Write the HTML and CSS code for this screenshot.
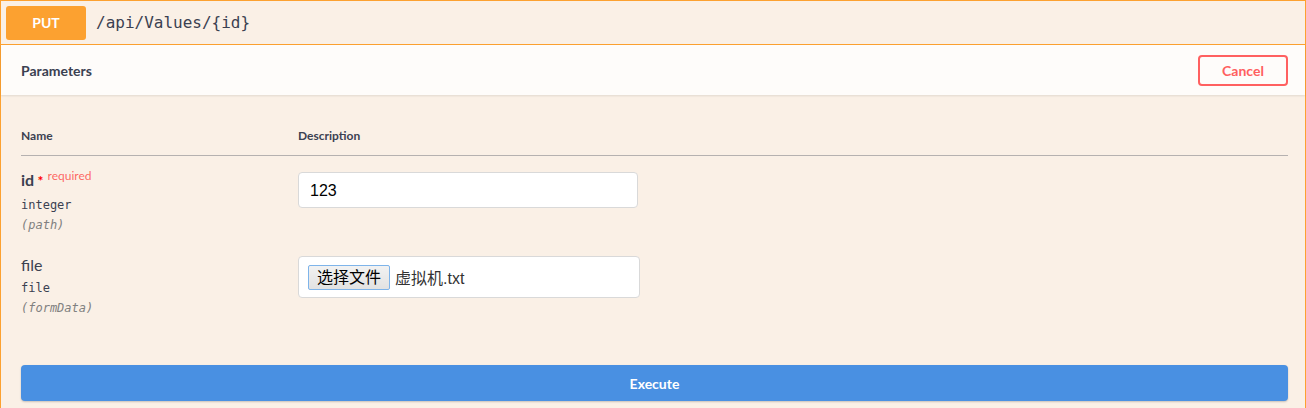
FILE: index.html
```html
<!DOCTYPE html>
<html>
<head>
	<meta charset="utf-8">
	<meta name="viewport" content="width=device-width, initial-scale=1.0">
	<link rel="stylesheet" href="styles.css">
</head>
<body>
	<div class="opblock">
		<!-- operation summary -->
		<div class="summary">
			<span class="method">PUT</span>
			<span class="path">/api/Values/{id}</span>
		</div>

		<!-- parameters header -->
		<div class="section-header">
			<h4>Parameters</h4>
			<button class="btn-cancel">Cancel</button>
		</div>

		<div class="params">
			<table>
				<thead>
					<tr>
						<th class="col-name">Name</th>
						<th>Description</th>
					</tr>
				</thead>
				<tbody>
					<tr>
						<td class="col-name">
							<div class="param-name required">id<span class="star">&nbsp;*</span><span class="req">required</span></div>
							<div class="param-type">integer</div>
							<div class="param-in">(path)</div>
						</td>
						<td>
							<div class="text-input">123</div>
						</td>
					</tr>
					<tr>
						<td class="col-name">
							<div class="param-name">file</div>
							<div class="param-type">file</div>
							<div class="param-in">(formData)</div>
						</td>
						<td>
							<div class="file-input">
								<span class="file-btn">选择文件</span>
								<span class="file-name">虚拟机.txt</span>
							</div>
						</td>
					</tr>
				</tbody>
			</table>
		</div>

		<!-- execute -->
		<div class="execute-wrapper">
			<button class="btn-execute">Execute</button>
		</div>
	</div>
</body>
</html>
```

FILE: styles.css
```css
body {
	margin: 0;
	background: #fff;
	font-family: Lato, sans-serif;
	color: #3b4151;
}

/* operation block */
.opblock {
	border: 1px solid #fca130;
	background: #faf0e6;
}

.summary {
	display: flex;
	align-items: center;
	height: 43px;
	padding: 0 5px;
	border-bottom: 1px solid #fca130;
}

.method {
	width: 80px;
	height: 34px;
	line-height: 34px;
	border-radius: 3px;
	background: #fca130;
	color: #fff;
	font-size: 14px;
	font-weight: 700;
	text-align: center;
}

.path {
	padding: 0 10px;
	font-family: "DejaVu Sans Mono", monospace;
	font-size: 16px;
	color: #3b4151;
}

/* parameters header */
.section-header {
	display: flex;
	align-items: center;
	justify-content: space-between;
	height: 50px;
	padding: 0 17px 0 20px;
	background: rgba(255, 255, 255, 0.8);
	box-shadow: 0 1px 2px rgba(0, 0, 0, 0.1);
}

.section-header h4 {
	margin: 0;
	font-size: 14px;
	font-weight: 700;
}

.btn-cancel {
	width: 90px;
	height: 31px;
	border: 2px solid #ff6060;
	border-radius: 4px;
	background: transparent;
	color: #ff6060;
	font-family: Lato, sans-serif;
	font-size: 14px;
	font-weight: 700;
}

/* parameters table */
.params {
	padding: 20px 17px 0 20px;
}

table {
	width: 100%;
	border-collapse: collapse;
}

th {
	height: 40px;
	padding: 0;
	text-align: left;
	font-size: 12px;
	font-weight: 700;
	vertical-align: middle;
	border-bottom: 1px solid rgba(59, 65, 81, 0.2);
}

.col-name {
	width: 277px;
}

td {
	padding: 15px 0 6px;
	vertical-align: top;
}

.param-name {
	font-size: 16px;
	line-height: 18px;
}

.param-name.required {
	font-weight: 700;
}

.star {
	color: red;
	font-size: 14px;
}

.req {
	position: relative;
	top: -6px;
	padding-left: 4px;
	color: rgba(255, 0, 0, 0.6);
	font-size: 12px;
	font-weight: 400;
}

.param-type {
	margin-top: 4px;
	font-family: "DejaVu Sans Mono", monospace;
	font-size: 12px;
	line-height: 20px;
}

.param-in {
	font-family: "DejaVu Sans Mono", monospace;
	font-size: 12px;
	line-height: 20px;
	font-style: italic;
	color: gray;
}

.text-input {
	box-sizing: border-box;
	width: 340px;
	height: 36px;
	margin-top: 1px;
	padding: 2px 11px 0;
	line-height: 32px;
	border: 1px solid #d9d9d9;
	border-radius: 4px;
	background: #fff;
	font-family: "Liberation Sans", sans-serif;
	font-size: 16px;
	color: #000;
}

.file-input {
	box-sizing: border-box;
	display: flex;
	align-items: center;
	gap: 5px;
	width: 342px;
	height: 42px;
	padding: 0 9px;
	border: 1px solid #d9d9d9;
	border-radius: 4px;
	background: #fff;
	font-family: "Liberation Sans", "Noto Sans CJK SC", sans-serif;
	font-size: 16px;
}

.file-btn {
	box-sizing: border-box;
	height: 25px;
	padding: 0 8px;
	line-height: 23px;
	border: 1px solid #7eb4ea;
	border-radius: 2px;
	background: linear-gradient(#f2f2f2, #e2e2e2);
	color: #000;
}

.file-name {
	color: #333;
}

/* execute button */
.execute-wrapper {
	padding: 41px 17px 7px 20px;
}

.btn-execute {
	display: block;
	width: 100%;
	height: 36px;
	border: none;
	border-radius: 4px;
	background: #4990e2;
	box-shadow: 0 1px 2px rgba(0, 0, 0, 0.2);
	color: #fff;
	font-family: Lato, sans-serif;
	font-size: 14px;
	font-weight: 700;
}
```
